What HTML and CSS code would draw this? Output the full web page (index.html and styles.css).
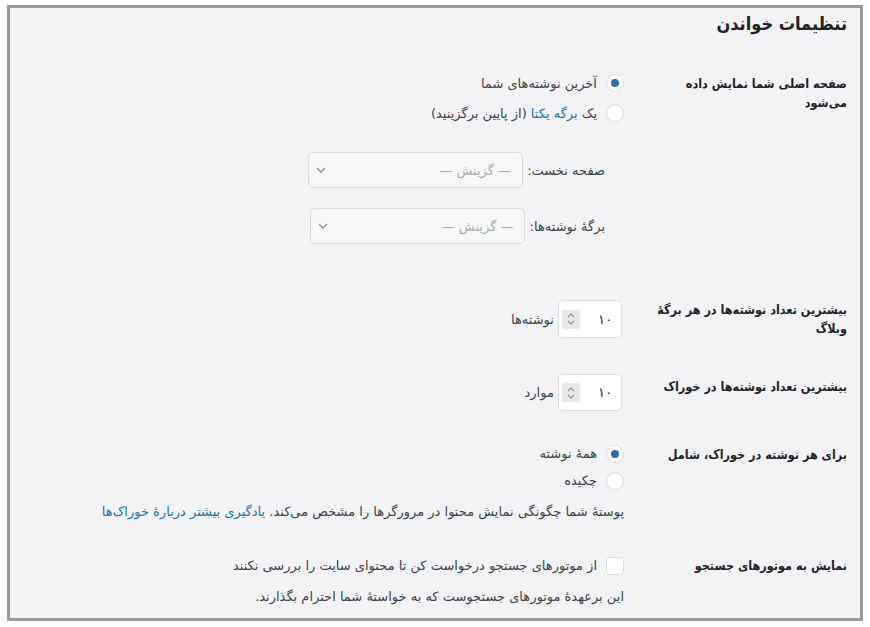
FILE: index.html
```html
<!DOCTYPE html>
<html lang="fa" dir="rtl">
<head>
    <meta charset="UTF-8">
    <title>تنظیمات خواندن</title>
    <link rel="stylesheet" href="styles.css">
</head>
<body>
<div class="wrap">
    <h1>تنظیمات خواندن</h1>
    <div class="form-table">
        <div class="row row-front">
            <div class="th">صفحه اصلی شما نمایش داده می‌شود</div>
            <div class="td">
                <label class="opt"><span class="radio checked"></span>آخرین نوشته‌های شما</label>
                <label class="opt"><span class="radio"></span>یک&nbsp;<a href="#">برگه یکتا</a>&nbsp;(از پایین برگزینید)</label>
                <ul class="static-pages">
                    <li><label>صفحه نخست:&nbsp;<span class="select">— گزینش —<svg class="chev" width="10" height="6" viewBox="0 0 10 6"><path d="M1 1l4 4 4-4" fill="none" stroke="#8c8f94" stroke-width="1.4"/></svg></span></label></li>
                    <li class="second"><label>برگهٔ نوشته‌ها:&nbsp;<span class="select">— گزینش —<svg class="chev" width="10" height="6" viewBox="0 0 10 6"><path d="M1 1l4 4 4-4" fill="none" stroke="#8c8f94" stroke-width="1.4"/></svg></span></label></li>
                </ul>
            </div>
        </div>
        <div class="row row-posts">
            <div class="th">بیشترین تعداد نوشته‌ها در هر برگهٔ وبلاگ</div>
            <div class="td">
                <label class="num-line"><span class="number">۱۰<span class="spin"><svg width="10" height="14" viewBox="0 0 10 14"><path d="M2 5l3-3 3 3M2 9l3 3 3-3" fill="none" stroke="#8c8f94" stroke-width="1.2"/></svg></span></span>&nbsp;نوشته‌ها</label>
            </div>
        </div>
        <div class="row row-feed">
            <div class="th">بیشترین تعداد نوشته‌ها در خوراک</div>
            <div class="td">
                <label class="num-line"><span class="number tall">۱۰<span class="spin"><svg width="10" height="14" viewBox="0 0 10 14"><path d="M2 5l3-3 3 3M2 9l3 3 3-3" fill="none" stroke="#8c8f94" stroke-width="1.2"/></svg></span></span>&nbsp;موارد</label>
            </div>
        </div>
        <div class="row row-content">
            <div class="th">برای هر نوشته در خوراک، شامل</div>
            <div class="td">
                <label class="opt short"><span class="radio checked"></span>همهٔ نوشته</label>
                <label class="opt short"><span class="radio"></span>چکیده</label>
                <p class="description">پوستهٔ شما چگونگی نمایش محتوا در مرورگرها را مشخص می‌کند. <a href="#">یادگیری بیشتر دربارهٔ خوراک‌ها</a></p>
            </div>
        </div>
        <div class="row row-search">
            <div class="th">نمایش به موتورهای جستجو</div>
            <div class="td">
                <label class="opt short"><span class="checkbox"></span>از موتورهای جستجو درخواست کن تا محتوای سایت را بررسی نکنند</label>
                <p class="description">این برعهدهٔ موتورهای جستجوست که به خواستهٔ شما احترام بگذارند.</p>
            </div>
        </div>
    </div>
</div>
</body>
</html>
```

FILE: styles.css
```css
body,div,ul,li,h1,p{
    margin:0;
    padding:0;
}
ul{
    list-style-type:none;
}
body{
    background:#fff;
    color:#3c434a;
    font:13px/19px "DejaVu Sans",sans-serif;
}
a{
    color:#2271b1;
    text-decoration:none;
}
.wrap{
    margin:5px 7px 6px 7px;
    height:610px;
    border:3px solid #999;
    background:#f3f3f5;
    padding:0 13px 0 0;
    overflow:hidden;
}
h1{
    padding-top:2px;
    font-family:"DejaVu Sans Condensed","DejaVu Sans",sans-serif;
    font-size:18px;
    line-height:28px;
    font-weight:700;
    color:#1d2327;
}
.row{display:flex;align-items:flex-start;}
.th{
    width:200px;
    flex:none;
    box-sizing:border-box;
    padding-left:5px;
    font-family:"DejaVu Sans Condensed","DejaVu Sans",sans-serif;
    font-size:12.5px;
    font-weight:700;
    color:#1d2327;
}
.td{padding-right:23px;}

.row-front{margin-top:30px;}
.row-front .th{padding-top:6px;}
.row-posts{margin-top:56px;}
.row-feed{margin-top:36px;}
.row-feed .th{padding-top:3px;}
.row-content{margin-top:29px;}
.row-content .th{padding-top:5px;}
.row-search{margin-top:31px;}
.row-search .th{padding-top:4px;}

.opt{display:flex;align-items:center;height:30px;white-space:nowrap;}
.opt.short{height:27px;}
.radio{
    width:16px;height:16px;
    border:1px solid #dcdcde;
    border-radius:50%;
    background:#fff;
    margin-left:9px;
    position:relative;
    flex:none;
}
.radio.checked:after{
    content:"";
    position:absolute;
    left:4px;top:4px;
    width:8px;height:8px;
    border-radius:50%;
    background:#2271b1;
}
.checkbox{
    width:16px;height:16px;
    border:1px solid #dcdcde;
    border-radius:4px;
    background:#fff;
    margin-left:9px;
    flex:none;
}

.static-pages{margin:24px 19px 0 0;}
.static-pages li{height:36px;}
.static-pages li.second{margin-top:20px;}
.static-pages label{display:flex;align-items:center;height:36px;}
.select{
    display:flex;align-items:center;
    width:215px;height:36px;
    box-sizing:border-box;
    padding:0 11px 0 7px;
    border:1px solid #dcdcde;
    border-radius:5px;
    background:#f6f7f7;
    color:#a7aaad;
}
.select .chev{margin-right:auto;}

.num-line{display:flex;align-items:center;margin-right:2px;}
.number{
    display:flex;align-items:center;
    width:64px;height:38px;
    box-sizing:border-box;
    padding:0 9px 0 3px;
    border:1px solid #dcdcde;
    border-radius:5px;
    background:#fff;
    color:#1d2327;
}
.number.tall{height:37px;}
.spin{
    margin-right:auto;
    width:18px;height:19px;
    background:#e9e9ea;
    display:flex;align-items:center;justify-content:center;
}
.description{margin-top:8px;}
```
